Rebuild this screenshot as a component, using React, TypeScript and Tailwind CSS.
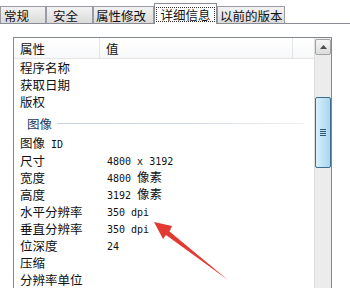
const cjk = { fontFamily: '"Noto Sans CJK SC", "Noto Sans", sans-serif' };

const tabs = [
  { label: "常规", cls: "w-[46px] pl-[3px]" },
  { label: "安全", cls: "w-[47px] pl-[6px]" },
  { label: "属性修改", cls: "w-[61px] pl-[2px]" },
  { label: "详细信息", cls: "w-[63px]", active: true },
  { label: "以前的版本", cls: "w-[68px] pl-[2px]" },
];

const topRows = [{ k: "程序名称" }, { k: "获取日期" }, { k: "版权" }];

const imageRows = [
  { k: "图像", mono: " ID" },
  { k: "尺寸", v: "4800 x 3192" },
  { k: "宽度", v: "4800", unit: "像素" },
  { k: "高度", v: "3192", unit: "像素" },
  { k: "水平分辨率", v: "350 dpi" },
  { k: "垂直分辨率", v: "350 dpi" },
  { k: "位深度", v: "24" },
  { k: "压缩" },
  { k: "分辨率单位" },
];

type Row = { k: string; v?: string; unit?: string; mono?: string };

function PropRow({ row }: { row: Row }) {
  return (
    <div className="flex h-[17px] items-center text-[12.5px] leading-[17px] text-[#111]">
      <div className="w-[86px] shrink-0 whitespace-nowrap pl-[6px]">
        {row.k}
        {row.mono && <span className="font-['DejaVu_Sans_Mono',monospace] text-[10px]">{row.mono}</span>}
      </div>
      <div className="whitespace-nowrap pl-[7px]">
        {row.v && <span className="font-['DejaVu_Sans_Mono',monospace] text-[10px]">{row.v}</span>}
        {row.unit && <span className="ml-[6px]">{row.unit}</span>}
      </div>
    </div>
  );
}

function Scrollbar() {
  return (
    <div className="flex w-[17px] shrink-0 flex-col border-l border-[#dedede] bg-[#ececec]">
      <div className="mt-px flex h-[16px] w-[16px] items-center justify-center rounded-[2px] border border-[#a3a3a3] bg-gradient-to-b from-[#f6f6f6] to-[#dcdcdc]">
        <svg width="7" height="4" viewBox="0 0 7 4">
          <path d="M0 4 L3.5 0 L7 4 Z" fill="#4d4d4d" />
        </svg>
      </div>
      <div className="mt-[42px] flex h-[71px] w-[16px] items-center justify-center rounded-[2px] border border-[#3c6e92] bg-gradient-to-r from-[#d9f0fb] via-[#bfe3f5] to-[#a9d6ee]">
        <div className="flex flex-col gap-[1px]">
          <div className="h-px w-[6px] bg-[#2d5a7a]" />
          <div className="h-px w-[6px] bg-[#2d5a7a]" />
          <div className="h-px w-[6px] bg-[#2d5a7a]" />
          <div className="h-px w-[6px] bg-[#2d5a7a]" />
        </div>
      </div>
    </div>
  );
}

export default function App() {
  return (
    <div className="relative h-[288px] w-[350px] overflow-hidden bg-white" style={cjk}>
      <div className="flex h-[24px] items-end border-b border-[#898c95]">
        {tabs.map((t) =>
          t.active ? (
            <div
              key={t.label}
              className={`${t.cls} -mb-px flex h-[21px] items-center justify-center whitespace-nowrap border-x border-t border-[#898c95] bg-white`}
            >
              <span className="border border-dotted border-[#333] px-[3px] text-[12.5px] leading-[13px] text-[#111]">
                {t.label}
              </span>
            </div>
          ) : (
            <div
              key={t.label}
              className={`${t.cls} flex h-[17px] items-center whitespace-nowrap border-x border-t border-[#9a9ca3] bg-gradient-to-b from-[#f3f3f3] to-[#dadada] text-[12.5px] leading-[15px] text-[#111]`}
            >
              {t.label}
            </div>
          )
        )}
      </div>

      <div className="ml-[13px] mt-[13px] flex h-[300px] w-[319px] border border-[#828790] bg-white">
        <div className="flex-1">
          <div className="flex h-[21px] items-center border-b border-[#e5e5e5] bg-gradient-to-b from-white to-[#f7f8f9] text-[12.5px] leading-[17px] text-[#111]">
            <div className="flex h-full w-[86px] items-center border-r border-[#e3e5e8] pl-[6px]">属性</div>
            <div className="flex h-full w-[193px] items-center border-r border-[#e3e5e8] pl-[6px]">值</div>
          </div>
          {topRows.map((r) => (
            <PropRow key={r.k} row={r} />
          ))}
          <div className="flex h-[25px] items-center pt-[2px]">
            <span className="pl-[13px] text-[12.5px] leading-[17px] text-[#1e395b]">图像</span>
            <div className="ml-[5px] mr-[10px] h-px flex-1 bg-gradient-to-r from-[#c9d2da] via-[#d2d9df] to-[#eef1f3]" />
          </div>
          {imageRows.map((r) => (
            <PropRow key={r.k + (r.mono ?? "")} row={r} />
          ))}
        </div>
        <Scrollbar />
      </div>

      <svg className="absolute left-0 top-0" width="350" height="288" viewBox="0 0 350 288">
        <polygon
          points="154,222 172,226 169.5,231.5 228,280 166,235 163,239"
          fill="#e23a33"
        />
      </svg>
    </div>
  );
}
